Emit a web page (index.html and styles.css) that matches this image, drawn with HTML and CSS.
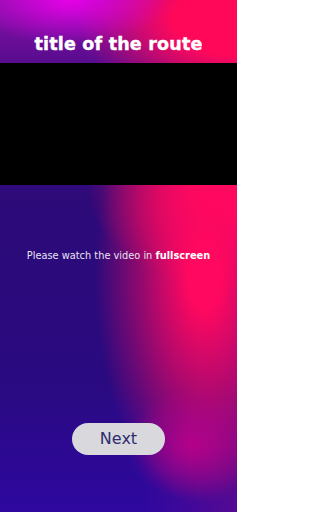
FILE: index.html
```html
<!DOCTYPE html>
<html>
<head>
<meta charset="utf-8">
<link rel="stylesheet" href="styles.css">
</head>
<body>
<div class="screen">
  <header class="header"><h1 class="title">title of the route</h1></header>
  <div class="video"></div>
  <div class="middle">
    <p class="note">Please watch the video in <b>fullscreen</b></p>
  </div>
  <div class="actions"><button class="next">Next</button></div>
</div>
</body>
</html>
```
FILE: styles.css
```css
html, body { margin: 0; padding: 0; }
body { width: 237px; height: 512px; overflow: hidden; }
.screen {
  width: 237px; height: 512px;
  display: flex; flex-direction: column;
  background:
    radial-gradient(ellipse 65px 55px at 192px 445px, rgba(190,0,140,0.85), rgba(190,0,140,0) 100%),
    radial-gradient(ellipse 100px 45px at 70px 0px, rgba(235,0,235,0.95), rgba(235,0,235,0) 100%),
    radial-gradient(ellipse 110px 230px at 205px 275px, rgba(255,8,95,1) 15%, rgba(255,8,95,0) 100%),
    radial-gradient(ellipse 150px 100px at 237px 190px, rgba(255,8,95,1) 25%, rgba(255,8,95,0) 100%),
    radial-gradient(ellipse 160px 90px at 237px 20px, rgba(255,8,90,1) 40%, rgba(255,8,90,0) 100%),
    linear-gradient(90deg, rgba(0,0,0,0) 60%, rgba(110,10,140,0.6) 100%),
    linear-gradient(180deg, #8a10a8 0px, #5a0c90 60px, #2c0a78 200px, #2a0a80 380px, #2e08a0 512px);
  font-family: "DejaVu Sans", sans-serif;
}
.header {
  height: 63px; display: flex; align-items: flex-end; justify-content: center;
}
.title {
  margin: 0 0 9px; color: #fff; font-size: 17.5px; font-weight: 800;
  letter-spacing: 0.2px; line-height: 20px; -webkit-text-stroke: 0.4px #fff;
}
.video { height: 122px; background: #000; }
.middle { height: 140px; display: flex; align-items: center; justify-content: center; }
.note { margin: 0; color: #e8e4f2; font-size: 9.8px; letter-spacing: 0; }
.note b { font-weight: 700; color: #fff; }
.actions { display: flex; justify-content: center; padding-top: 98px; }
.next {
  width: 93px; height: 32px; border: 0; border-radius: 16px;
  background: #d9d8dc; color: #2f2c70; font-family: "DejaVu Sans", sans-serif;
  font-size: 16px; padding: 0; line-height: 32px;
}
```
